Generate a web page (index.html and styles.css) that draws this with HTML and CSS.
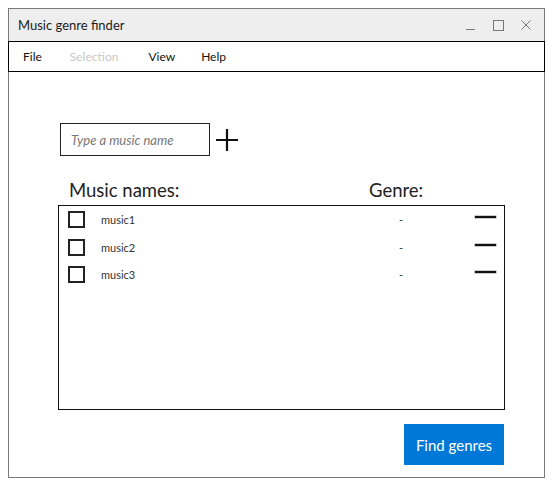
FILE: index.html
```html
<!DOCTYPE html>
<html>
<head>
<meta charset="utf-8">
<link rel="stylesheet" href="styles.css">
</head>
<body>
<div class="window">
  <div class="titlebar">
    <span class="title">Music genre finder</span>
    <div class="controls">
      <span class="ctl-min"></span>
      <span class="ctl-max"></span>
      <svg class="ctl-close" width="10" height="10" viewBox="0 0 10 10"><path d="M0.5 0.5L9.5 9.5M9.5 0.5L0.5 9.5" stroke="#777" stroke-width="1"/></svg>
    </div>
  </div>
  <div class="menubar">
    <span class="menu">File</span>
    <span class="menu disabled">Selection</span>
    <span class="menu">View</span>
    <span class="menu">Help</span>
  </div>
  <div class="content">
    <div class="add-row">
      <div class="input"><span class="placeholder">Type a music name</span></div>
      <svg class="plus" width="24" height="24" viewBox="0 0 24 24"><path d="M12 1V23M1 12H23" stroke="#111" stroke-width="2.2"/></svg>
    </div>
    <div class="headings">
      <span class="h-names">Music names:</span>
      <span class="h-genre">Genre:</span>
    </div>
    <div class="list">
      <div class="row">
        <span class="check"></span>
        <span class="name">music1</span>
        <span class="genre">-</span>
        <span class="remove"></span>
      </div>
      <div class="row">
        <span class="check"></span>
        <span class="name">music2</span>
        <span class="genre">-</span>
        <span class="remove"></span>
      </div>
      <div class="row">
        <span class="check"></span>
        <span class="name">music3</span>
        <span class="genre">-</span>
        <span class="remove"></span>
      </div>
    </div>
    <div class="actions">
      <button class="find">Find genres</button>
    </div>
  </div>
</div>
</body>
</html>
```

FILE: styles.css
```css
* { box-sizing: border-box; }
body {
  margin: 0;
  background: #fff;
  font-family: "Lato", "Noto Sans", sans-serif;
  color: #111;
}
.window {
  margin: 8px 0 0 8px;
  width: 537px;
  height: 470px;
  border: 1px solid #7a7a7a;
  display: flex;
  flex-direction: column;
}
.titlebar {
  height: 32px;
  background: #eeeeee;
  display: flex;
  align-items: center;
  padding: 0 0 0 9px;
}
.title {
  font-size: 13px;
  color: #222;
  flex: 1;
}
.controls {
  display: flex;
  align-items: center;
  padding-right: 13px;
}
.ctl-min {
  width: 9px;
  height: 1px;
  background: #777;
  margin-top: 9px;
  margin-right: 18px;
}
.ctl-max {
  width: 11px;
  height: 11px;
  border: 1px solid #777;
  margin-right: 17px;
}
.menubar {
  margin: 0 -1px;
  height: 31px;
  border: 1px solid #000;
  display: flex;
  align-items: center;
  padding-left: 14px;
  font-size: 12px;
}
.menu { margin-right: 28px; color: #111; }
.menu:nth-child(2) { margin-right: 30px; }
.menu:nth-child(3) { margin-right: 26px; }
.menu.disabled { color: #c8c8c8; }
.content {
  flex: 1;
  display: flex;
  flex-direction: column;
  padding: 51px 0 0 49px;
}
.add-row {
  display: flex;
  align-items: center;
  padding-left: 2px;
}
.input {
  width: 150px;
  height: 33px;
  border: 1px solid #222;
  display: flex;
  align-items: center;
  padding-left: 10px;
}
.placeholder {
  font-style: italic;
  font-size: 13px;
  color: #777;
}
.plus { margin-left: 5px; margin-top: 1px; }
.headings {
  display: flex;
  margin-top: 21px;
  padding-left: 11px;
  font-size: 18.5px;
  line-height: 26px;
  color: #222;
}
.h-names { width: 300px; }
.list {
  margin-top: 2px;
  width: 447px;
  height: 205px;
  border: 1px solid #111;
  padding-top: 0;
}
.row {
  display: flex;
  align-items: center;
  height: 27.5px;
}
.check {
  width: 17px;
  height: 17px;
  border: 2px solid #222;
  margin-left: 9px;
}
.name {
  font-size: 11px;
  color: #333;
  margin-left: 16px;
  width: 298px;
}
.genre {
  font-size: 11px;
  color: #333;
  width: 76px;
}
.remove {
  width: 21px;
  height: 2px;
  background: #111;
  margin-top: -5px;
  box-shadow: 0 0 0 0.6px #aaa;
}
.actions {
  display: flex;
  justify-content: flex-end;
  width: 446px;
  margin-top: 14px;
}
.find {
  width: 100px;
  height: 41px;
  border: none;
  background: #0078d7;
  color: #fff;
  font-family: "Lato", "Noto Sans", sans-serif;
  font-size: 15px;
  padding: 0;
}
```
